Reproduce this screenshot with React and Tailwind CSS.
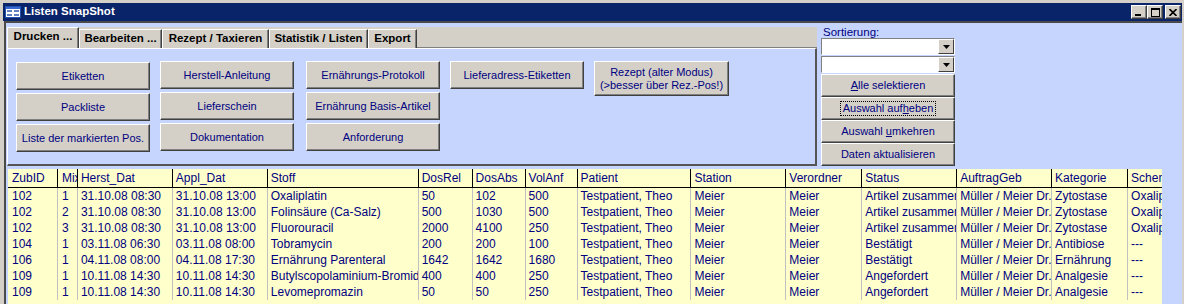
import React from 'react';

const cols = [
  { t: 'ZubID', w: 50, pl: 4 },
  { t: 'Mix', w: 20, pl: 4 },
  { t: 'Herst_Dat', w: 95 },
  { t: 'Appl_Dat', w: 95 },
  { t: 'Stoff', w: 151 },
  { t: 'DosRel', w: 54 },
  { t: 'DosAbs', w: 53 },
  { t: 'VolAnf', w: 52 },
  { t: 'Patient', w: 114 },
  { t: 'Station', w: 95 },
  { t: 'Verordner', w: 76 },
  { t: 'Status', w: 95 },
  { t: 'AuftragGeb', w: 95 },
  { t: 'Kategorie', w: 76 },
  { t: 'Schema', w: 34, last: true },
];

const rows = [
  ['102', '1', '31.10.08 08:30', '31.10.08 13:00', 'Oxaliplatin', '50', '102', '500', 'Testpatient, Theo', 'Meier', 'Meier', 'Artikel zusammengestellt', 'Müller / Meier Dr.', 'Zytostase', 'Oxaliplatin'],
  ['102', '2', '31.10.08 08:30', '31.10.08 13:00', 'Folinsäure (Ca-Salz)', '500', '1030', '500', 'Testpatient, Theo', 'Meier', 'Meier', 'Artikel zusammengestellt', 'Müller / Meier Dr.', 'Zytostase', 'Oxaliplatin'],
  ['102', '3', '31.10.08 08:30', '31.10.08 13:00', 'Fluorouracil', '2000', '4100', '250', 'Testpatient, Theo', 'Meier', 'Meier', 'Artikel zusammengestellt', 'Müller / Meier Dr.', 'Zytostase', 'Oxaliplatin'],
  ['104', '1', '03.11.08 06:30', '03.11.08 08:00', 'Tobramycin', '200', '200', '100', 'Testpatient, Theo', 'Meier', 'Meier', 'Bestätigt', 'Müller / Meier Dr.', 'Antibiose', '---'],
  ['106', '1', '04.11.08 08:00', '04.11.08 17:30', 'Ernährung Parenteral', '1642', '1642', '1680', 'Testpatient, Theo', 'Meier', 'Meier', 'Bestätigt', 'Müller / Meier Dr.', 'Ernährung', '---'],
  ['109', '1', '10.11.08 14:30', '10.11.08 14:30', 'Butylscopolaminium-Bromid', '400', '400', '250', 'Testpatient, Theo', 'Meier', 'Meier', 'Angefordert', 'Müller / Meier Dr.', 'Analgesie', '---'],
  ['109', '1', '10.11.08 14:30', '10.11.08 14:30', 'Levomepromazin', '50', '50', '250', 'Testpatient, Theo', 'Meier', 'Meier', 'Angefordert', 'Müller / Meier Dr.', 'Analgesie', '---'],
];

const Btn = ({ children, className = '' }) => (
  <div
    className={`flex items-center justify-center border border-t-white border-l-white border-r-[#404040] border-b-[#404040] bg-[#d4d0c8] text-center text-[11px] leading-[13px] text-[#000080] shadow-[inset_-1px_-1px_0_#808080] ${className}`}
  >
    {children}
  </div>
);

const Combo = () => (
  <div className="flex h-[17px] w-[134px] border border-t-[#808080] border-l-[#808080] border-r-white border-b-white bg-white">
    <div className="flex-1" />
    <div className="flex w-[16px] items-center justify-center border border-t-white border-l-white border-r-[#404040] border-b-[#404040] bg-[#d4d0c8]">
      <svg width="7" height="4" viewBox="0 0 7 4">
        <path d="M0 0h7L3.5 4z" fill="#000" />
      </svg>
    </div>
  </div>
);

const CapBtn = ({ children }) => (
  <div className="flex h-[14px] w-[16px] items-center justify-center border border-t-white border-l-white border-r-[#404040] border-b-[#404040] bg-[#d4d0c8] shadow-[inset_-1px_-1px_0_#808080]">
    {children}
  </div>
);

const tabs = [
  { t: 'Drucken ...', w: 'w-[72px]', sel: true },
  { t: 'Bearbeiten ...', w: 'w-[83px]' },
  { t: 'Rezept / Taxieren', w: 'w-[107px]' },
  { t: 'Statistik / Listen', w: 'w-[99px]' },
  { t: 'Export', w: 'w-[49px]' },
];

export default function App() {
  return (
    <div className="flex h-[304px] w-[1184px] flex-col overflow-hidden bg-[#d4d0c8] pl-[3px] pr-[2px] pt-[3px] font-['Liberation_Sans',Arial,sans-serif]">
      {/* title bar */}
      <div className="flex h-[18px] items-center bg-[#0a246a] pl-[2px] pr-[1px]">
        <svg width="16" height="14" viewBox="0 0 16 14" className="mr-[3px]">
          <rect x="0.5" y="1.5" width="15" height="11" fill="#fff" stroke="#2050b0" />
          <rect x="1" y="2" width="14" height="2" fill="#3a6ad0" />
          <rect x="2" y="5" width="5" height="2" fill="#6080c0" />
          <rect x="9" y="5" width="5" height="2" fill="#6080c0" />
          <rect x="2" y="9" width="5" height="2" fill="#6080c0" />
          <rect x="9" y="9" width="5" height="2" fill="#6080c0" />
        </svg>
        <span className="text-[11.5px] font-bold text-white">Listen SnapShot</span>
        <div className="ml-auto flex items-center">
          <CapBtn>
            <div className="mt-[6px] mr-[2px] h-[2px] w-[6px] bg-black" />
          </CapBtn>
          <CapBtn>
            <div className="h-[9px] w-[9px] border border-t-2 border-black" />
          </CapBtn>
          <div className="w-[2px]" />
          <CapBtn>
            <svg width="8" height="7" viewBox="0 0 8 7">
              <path d="M0.5 0l7 7M7.5 0l-7 7" stroke="#000" strokeWidth="1.6" />
            </svg>
          </CapBtn>
        </div>
      </div>

      {/* body */}
      <div className="ml-[1px] flex flex-1 flex-col border-l-2 border-t-2 border-[#4a4a4a] bg-[#c6d5fe] pt-[4px]">
        <div className="flex items-start">
          {/* tab control */}
          <div className="ml-[1px] flex w-[810px] flex-col">
            <div className="flex h-[21px] items-end bg-[#d4d0c8]">
              {tabs.map((tab) => (
                <div
                  key={tab.t}
                  className={`flex items-center justify-center border-l border-t border-white border-r border-r-[#404040] shadow-[inset_-1px_0_0_#808080] text-[11.5px] font-bold text-black whitespace-nowrap ${tab.w} ${tab.sel ? 'h-[21px] pb-[2px]' : 'h-[19px]'}`}
                >
                  {tab.t}
                </div>
              ))}
              <div className="h-full flex-1 border-b border-[#808080]" />
            </div>
            <div className="flex h-[118px] gap-[10px] border-l border-t border-white border-r-2 border-b-2 border-r-[#555] border-b-[#555] pl-[8px] pt-[12px]">
              <div className="mt-[1px] flex w-[134px] flex-col gap-[3px]">
                <Btn className="h-[28px]">Etiketten</Btn>
                <Btn className="h-[28px]">Packliste</Btn>
                <Btn className="h-[28px]">Liste der markierten Pos.</Btn>
              </div>
              <div className="flex w-[134px] flex-col gap-[3px]">
                <Btn className="h-[28px]">Herstell-Anleitung</Btn>
                <Btn className="h-[28px]">Lieferschein</Btn>
                <Btn className="h-[28px]">Dokumentation</Btn>
              </div>
              <div className="ml-[2px] flex w-[134px] flex-col gap-[3px]">
                <Btn className="h-[28px]">Ernährungs-Protokoll</Btn>
                <Btn className="h-[28px]">Ernährung Basis-Artikel</Btn>
                <Btn className="h-[28px]">Anforderung</Btn>
              </div>
              <div className="flex w-[134px] flex-col">
                <Btn className="h-[28px]">Lieferadress-Etiketten</Btn>
              </div>
              <div className="flex w-[135px] flex-col">
                <Btn className="h-[35px]">
                  Rezept (alter Modus)
                  <br />
                  (&gt;besser über Rez.-Pos!)
                </Btn>
              </div>
            </div>
          </div>

          {/* right panel */}
          <div className="ml-[4px] flex w-[134px] flex-col">
            <div className="h-[11px] pl-[2px] text-[11.5px] leading-[11px] text-[#000080]">Sortierung:</div>
            <Combo />
            <div className="h-[1px]" />
            <Combo />
            <div className="h-[1px]" />
            <Btn className="h-[23px] text-[11.5px]">
              <span>
                <span className="underline">A</span>lle selektieren
              </span>
            </Btn>
            <Btn className="h-[23px] text-[11.5px]">
              <span className="px-[2px] outline-1 outline-dotted outline-black">
                Auswahl auf<span className="underline">h</span>eben
              </span>
            </Btn>
            <Btn className="h-[23px] text-[11.5px]">
              <span>
                Auswahl <span className="underline">u</span>mkehren
              </span>
            </Btn>
            <Btn className="h-[23px] text-[11.5px]">Daten aktualisieren</Btn>
          </div>
        </div>

        {/* datasheet */}
        <div className="ml-[2px] mt-[3px] w-[1154px] flex-1 bg-[#ffffcc] text-[12px] leading-[16px] text-[#000080]">
          <div className="flex h-[19px] border-b border-black">
            {cols.map((c) => (
              <div
                key={c.t}
                style={{ width: c.w, paddingLeft: c.pl ?? 3 }}
                className={`flex items-center overflow-hidden whitespace-nowrap ${c.last ? '' : 'border-r border-black'}`}
              >
                {c.t}
              </div>
            ))}
          </div>
          {rows.map((r, i) => (
            <div key={i} className="flex h-[16px]">
              {r.map((v, j) => (
                <div
                  key={j}
                  style={{ width: cols[j].w, paddingLeft: cols[j].pl ?? 3 }}
                  className={`overflow-hidden whitespace-nowrap ${cols[j].last ? '' : 'border-r border-[#c0c0c0]'}`}
                >
                  {v}
                </div>
              ))}
            </div>
          ))}
        </div>
      </div>
    </div>
  );
}
